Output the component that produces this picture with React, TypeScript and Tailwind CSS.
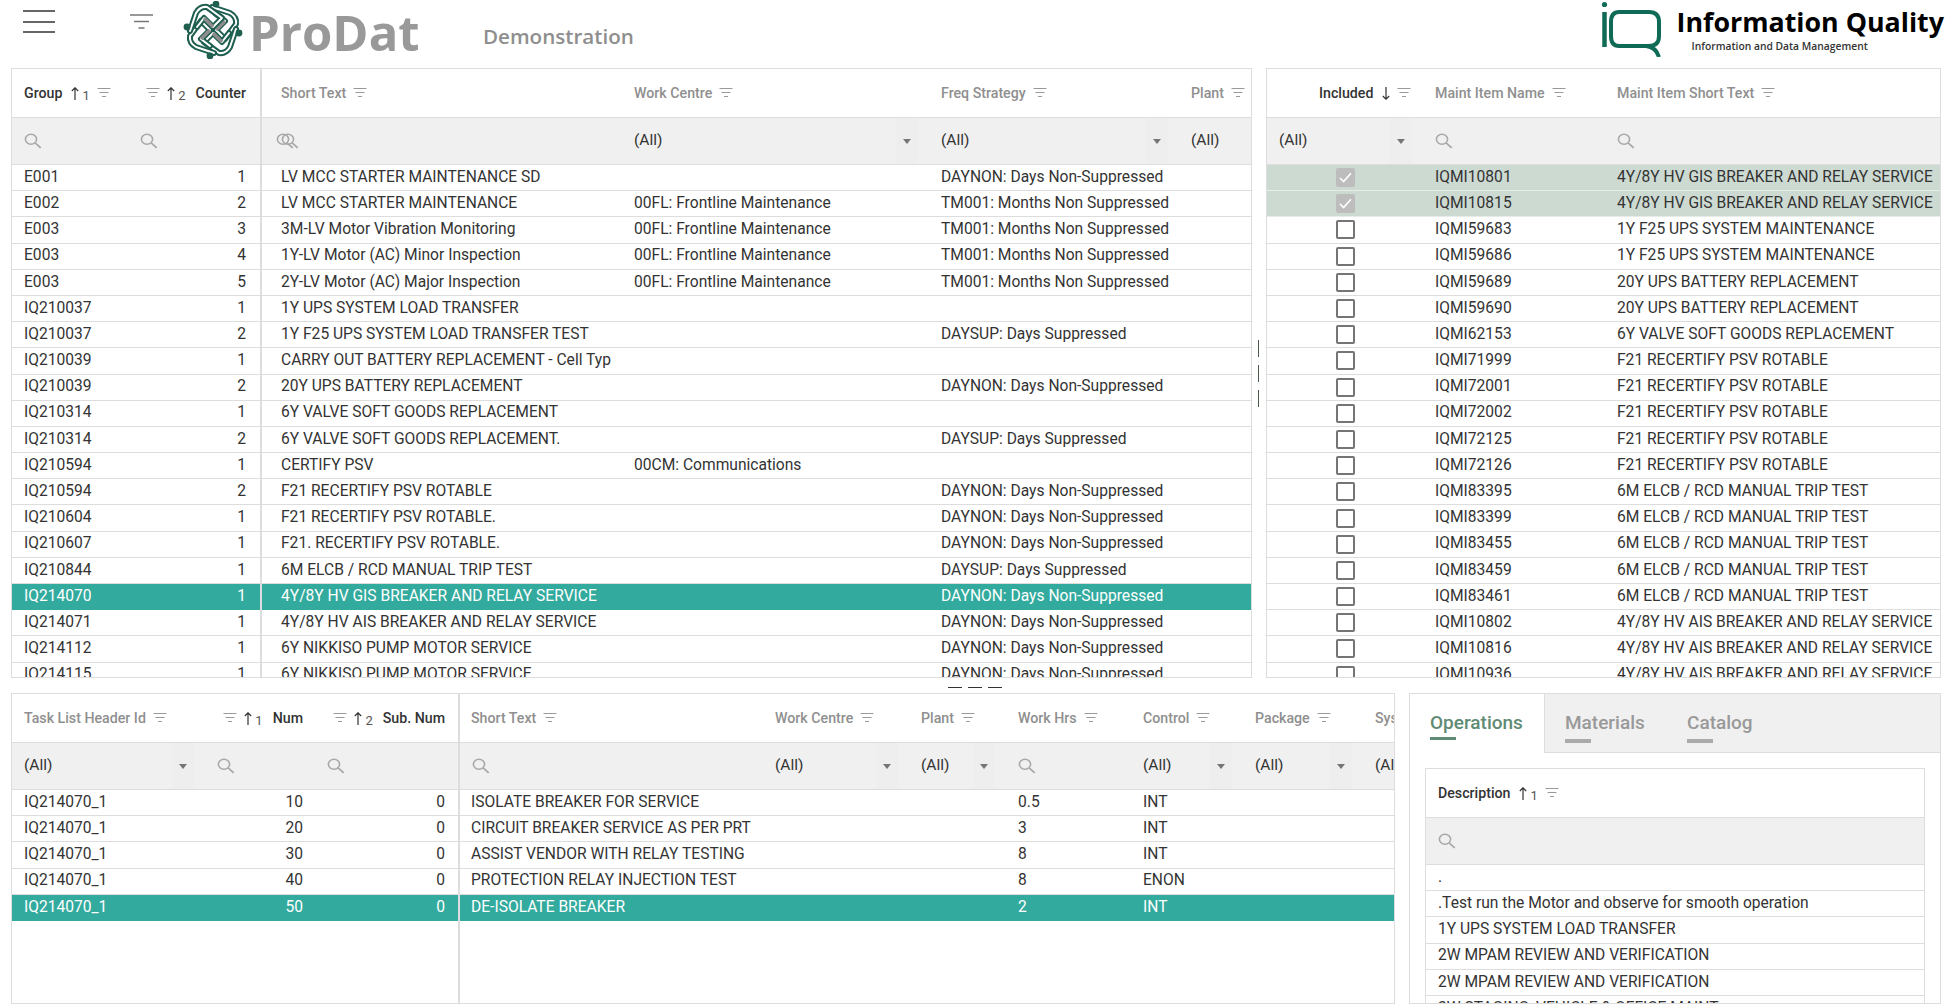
import React from "react";

type Col = {
  w: string;
  pad?: string;
  headPad?: string;
  label?: string;
  sort?: "up" | "down";
  idx?: string;
  right?: boolean;
  center?: boolean;
  filter?: "search" | "all" | "double" | "allshort";
};

const FilterIcon = () => (
  <svg width="14" height="10" viewBox="0 0 14 10" className="shrink-0" fill="none" stroke="#9a9a9a" strokeWidth="1">
    <path d="M0.5 0.5H13.5M2.5 4.5H11.5M5 8.5H9" />
  </svg>
);

const SearchIcon = ({ className = "" }: { className?: string }) => (
  <svg width="18" height="16" viewBox="0 0 17 17" preserveAspectRatio="none" className={`shrink-0 ${className}`} fill="none" stroke="#a8a8a8" strokeWidth="1.5">
    <circle cx="6.6" cy="6.6" r="5.3" />
    <path d="M10.6 10.6L15.8 15.8" strokeWidth="1.8" />
  </svg>
);

const Sort = ({ dir, idx }: { dir: "up" | "down"; idx?: string }) => (
  <span className="flex items-center shrink-0 gap-[3px]">
    <svg width="8" height="13" viewBox="0 0 8 13" fill="none" stroke="#333" strokeWidth="1.2">
      {dir === "up" ? <path d="M4 13V1M0.8 4L4 0.8L7.2 4" /> : <path d="M4 0V12M0.8 9L4 12.2L7.2 9" />}
    </svg>
    {idx && <span className="text-[13px] font-normal text-[#555] mt-[4px] leading-none">{idx}</span>}
  </span>
);

const HeaderCell = ({ col }: { col: Col }) => {
  const dark = !!col.sort;
  const text = <span className={`whitespace-nowrap pt-[1px] ${dark ? "text-[#333]" : "text-[#8f8f8f]"}`}>{col.label}</span>;
  return (
    <div className={`${col.w} ${col.headPad ?? col.pad ?? "px-3"} shrink-0 flex items-center gap-[7px] text-[14.2px] font-medium ${col.right ? "justify-end" : ""}`}>
      {col.right ? (
        <>
          <FilterIcon />
          {col.sort && <Sort dir={col.sort} idx={col.idx} />}
          <span className="ml-[3px] flex">{text}</span>
        </>
      ) : (
        <>
          {text}
          {col.sort && <span className="ml-[2px]"><Sort dir={col.sort} idx={col.idx} /></span>}
          {col.label && <FilterIcon />}
        </>
      )}
    </div>
  );
};

const FilterCell = ({ col }: { col: Col }) => {
  if (col.filter === "all") {
    return (
      <div className={`${col.w} pl-3 pr-[11px] shrink-0 flex items-stretch`}>
        <span className="flex-1 flex items-center text-[15.5px] text-[#333] pb-[1px]">(All)</span>
        <span className="w-[22px] flex items-center justify-center bg-[#eeeeee]">
          <svg width="8" height="5" viewBox="0 0 8 5"><path d="M0 0H8L4 5Z" fill="#757575" /></svg>
        </span>
      </div>
    );
  }
  if (col.filter === "allshort") {
    return (
      <div className={`${col.w} pl-3 shrink-0 flex items-center text-[15.5px] text-[#333] whitespace-nowrap pb-[1px]`}>(All)</div>
    );
  }
  if (col.filter === "double") {
    return (
      <div className={`${col.w} pl-[14px] shrink-0 flex items-center`}>
        <SearchIcon />
        <SearchIcon className="-ml-[13px]" />
      </div>
    );
  }
  return (
    <div className={`${col.w} pl-3 shrink-0 flex items-center`}>
      <SearchIcon />
    </div>
  );
};

const Pane = ({
  cols,
  rows,
  sel,
  greens = [],
  divider,
  grow,
}: {
  cols: Col[];
  rows: React.ReactNode[][];
  sel?: number;
  greens?: number[];
  divider?: boolean;
  grow?: boolean;
}) => (
  <div className={`flex flex-col overflow-hidden h-full ${grow ? "flex-1 min-w-0" : "shrink-0"} ${divider ? "border-r-2 border-[#dddddd]" : ""}`}>
    <div className="flex h-[49px] shrink-0 border-b border-[#dddddd]">
      {cols.map((c, i) => (
        <HeaderCell key={i} col={c} />
      ))}
    </div>
    <div className="flex h-[47px] shrink-0 bg-[#f0f0f0] border-b border-[#dddddd]">
      {cols.map((c, i) => (
        <FilterCell key={i} col={c} />
      ))}
    </div>
    <div className="flex-1 overflow-hidden">
      {rows.map((r, i) => (
        <div
          key={i}
          className={`flex h-[26.2px] border-b text-[15.6px] leading-none whitespace-nowrap ${
            i === sel
              ? "bg-[#33aa9e] text-white border-[#33aa9e]"
              : greens.includes(i)
              ? "bg-[#cddad2] text-[#333] border-[#e6ece8]"
              : "text-[#333] border-[#dddddd]"
          }`}
        >
          {cols.map((c, j) => (
            <div
              key={j}
              className={`${c.w} ${c.pad ?? "px-3"} shrink-0 flex items-center overflow-hidden ${c.right ? "justify-end" : ""} ${c.center ? "justify-center" : ""}`}
            >
              {r[j]}
            </div>
          ))}
        </div>
      ))}
    </div>
  </div>
);

const Check = ({ on }: { on?: boolean }) =>
  on ? (
    <span className="w-[19px] h-[19px] rounded-[2px] bg-[#bdbdbd] flex items-center justify-center">
      <svg width="13" height="11" viewBox="0 0 13 11" fill="none" stroke="#fff" strokeWidth="1.6"><path d="M1 6L4.6 9.6L12 1.2" /></svg>
    </span>
  ) : (
    <span className="w-[19px] h-[19px] rounded-[2px] border-2 border-[#757575] bg-white" />
  );

const NS = "DAYNON: Days Non-Suppressed";
const TM = "TM001: Months Non Suppressed";
const DS = "DAYSUP: Days Suppressed";
const FL = "00FL: Frontline Maintenance";

const topData: [string, string, string, string, string][] = [
  ["E001", "1", "LV MCC STARTER MAINTENANCE SD", "", NS],
  ["E002", "2", "LV MCC STARTER MAINTENANCE", FL, TM],
  ["E003", "3", "3M-LV Motor Vibration Monitoring", FL, TM],
  ["E003", "4", "1Y-LV Motor (AC) Minor Inspection", FL, TM],
  ["E003", "5", "2Y-LV Motor (AC) Major Inspection", FL, TM],
  ["IQ210037", "1", "1Y UPS SYSTEM LOAD TRANSFER", "", ""],
  ["IQ210037", "2", "1Y F25 UPS SYSTEM LOAD TRANSFER TEST", "", DS],
  ["IQ210039", "1", "CARRY OUT BATTERY REPLACEMENT - Cell Typ", "", ""],
  ["IQ210039", "2", "20Y UPS BATTERY REPLACEMENT", "", NS],
  ["IQ210314", "1", "6Y VALVE SOFT GOODS REPLACEMENT", "", ""],
  ["IQ210314", "2", "6Y VALVE SOFT GOODS REPLACEMENT.", "", DS],
  ["IQ210594", "1", "CERTIFY PSV", "00CM: Communications", ""],
  ["IQ210594", "2", "F21 RECERTIFY PSV ROTABLE", "", NS],
  ["IQ210604", "1", "F21 RECERTIFY PSV ROTABLE.", "", NS],
  ["IQ210607", "1", "F21. RECERTIFY PSV ROTABLE.", "", NS],
  ["IQ210844", "1", "6M ELCB / RCD MANUAL TRIP TEST", "", DS],
  ["IQ214070", "1", "4Y/8Y HV GIS BREAKER AND RELAY SERVICE", "", NS],
  ["IQ214071", "1", "4Y/8Y HV AIS BREAKER AND RELAY SERVICE", "", NS],
  ["IQ214112", "1", "6Y NIKKISO PUMP MOTOR SERVICE", "", NS],
  ["IQ214115", "1", "6Y NIKKISO PUMP MOTOR SERVICE", "", NS],
];

const maintData: [string, string][] = [
  ["IQMI10801", "4Y/8Y HV GIS BREAKER AND RELAY SERVICE"],
  ["IQMI10815", "4Y/8Y HV GIS BREAKER AND RELAY SERVICE"],
  ["IQMI59683", "1Y F25 UPS SYSTEM MAINTENANCE"],
  ["IQMI59686", "1Y F25 UPS SYSTEM MAINTENANCE"],
  ["IQMI59689", "20Y UPS BATTERY REPLACEMENT"],
  ["IQMI59690", "20Y UPS BATTERY REPLACEMENT"],
  ["IQMI62153", "6Y VALVE SOFT GOODS REPLACEMENT"],
  ["IQMI71999", "F21 RECERTIFY PSV ROTABLE"],
  ["IQMI72001", "F21 RECERTIFY PSV ROTABLE"],
  ["IQMI72002", "F21 RECERTIFY PSV ROTABLE"],
  ["IQMI72125", "F21 RECERTIFY PSV ROTABLE"],
  ["IQMI72126", "F21 RECERTIFY PSV ROTABLE"],
  ["IQMI83395", "6M ELCB / RCD MANUAL TRIP TEST"],
  ["IQMI83399", "6M ELCB / RCD MANUAL TRIP TEST"],
  ["IQMI83455", "6M ELCB / RCD MANUAL TRIP TEST"],
  ["IQMI83459", "6M ELCB / RCD MANUAL TRIP TEST"],
  ["IQMI83461", "6M ELCB / RCD MANUAL TRIP TEST"],
  ["IQMI10802", "4Y/8Y HV AIS BREAKER AND RELAY SERVICE"],
  ["IQMI10816", "4Y/8Y HV AIS BREAKER AND RELAY SERVICE"],
  ["IQMI10936", "4Y/8Y HV AIS BREAKER AND RELAY SERVICE"],
];

const taskData: [string, string, string, string, string, string][] = [
  ["10", "0", "ISOLATE BREAKER FOR SERVICE", "0.5", "INT", ""],
  ["20", "0", "CIRCUIT BREAKER SERVICE AS PER PRT", "3", "INT", ""],
  ["30", "0", "ASSIST VENDOR WITH RELAY TESTING", "8", "INT", ""],
  ["40", "0", "PROTECTION RELAY INJECTION TEST", "8", "ENON", ""],
  ["50", "0", "DE-ISOLATE BREAKER", "2", "INT", ""],
];

const ProDatMark = () => (
  <svg width="62" height="58" viewBox="-31 -29 62 58" className="shrink-0" fill="none">
    {[0, 90, 180, 270].map((a) => (
      <g key={a} transform={`rotate(${a})`}>
        <path d="M-1 -23 L17 -17 Q24 -13 23 -6 L12 9 L3 0 L12 -9 L3 -16" stroke="#1e5f50" strokeWidth="6" strokeLinejoin="round" strokeLinecap="round" />
        <path d="M-1 -23 L17 -17 Q24 -13 23 -6 L12 9 L3 0 L12 -9 L3 -16" stroke="#ffffff" strokeWidth="2" strokeLinejoin="round" strokeLinecap="round" />
        <path d="M3 0 L12 -9" stroke="#8d8d8d" strokeWidth="3.5" />
        <circle cx="3" cy="-26" r="3.4" fill="#1e5f50" />
      </g>
    ))}
  </svg>
);

const IQMark = () => (
  <svg width="60" height="56" viewBox="0 0 60 56" className="shrink-0" fill="none" stroke="#0f6b55" strokeWidth="4">
    <circle cx="3.5" cy="3.5" r="2.6" fill="#0f6b55" stroke="none" />
    <path d="M3.5 11V46" strokeWidth="4.5" />
    <path d="M18 11H48Q58 11 58 21V35Q58 45 48 45H18Q10 45 10 35V21Q10 11 18 11Z" />
    <path d="M45 45Q55 46 58 56" />
  </svg>
);

const TopBar = () => (
  <div className="h-[68px] shrink-0 flex items-start">
    <div className="w-[32px] ml-[23px] mt-[10px] flex flex-col gap-[8.5px]">
      <div className="h-[2px] bg-[#666666]" />
      <div className="h-[2px] bg-[#666666]" />
      <div className="h-[2px] bg-[#666666]" />
    </div>
    <svg width="23" height="16" viewBox="0 0 23 16" className="ml-[75px] mt-[14px]" fill="none" stroke="#777" strokeWidth="1.6">
      <path d="M0 1H23M4 7.5H19M8.5 14H14.5" />
    </svg>
    <div className="ml-[29px] mt-[1px]"><ProDatMark /></div>
    <span className="ml-[5px] mt-[2px] w-[170px] text-[49px] leading-[60px] font-bold text-[#999999] [font-family:'Open_Sans',sans-serif]">ProDat</span>
    <span className="ml-[64px] mt-[22px] text-[20.6px] leading-[28px] font-semibold text-[#8e8e8e] [font-family:'Open_Sans',sans-serif]">Demonstration</span>
    <div className="ml-auto mt-[1px] flex">
      <IQMark />
      <div className="ml-[16px] mr-[12px] flex flex-col [font-family:'Open_Sans',sans-serif]">
        <span className="text-[26.8px] leading-[34px] mt-[4px] font-bold text-black">Information Quality</span>
        <span className="text-[10.3px] leading-[14px] font-semibold text-[#333] ml-[15px]">Information and Data Management</span>
      </div>
    </div>
  </div>
);

const TopRow = () => (
  <div className="h-[610px] shrink-0 flex pl-[11px]">
    <div className="w-[1241px] h-full flex border border-[#dddddd] overflow-hidden">
      <Pane
        divider
        sel={16}
        cols={[
          { w: "w-[116px]", label: "Group", sort: "up", idx: "1", filter: "search" },
          { w: "w-[132px]", pad: "pl-3 pr-[14px]", label: "Counter", sort: "up", idx: "2", right: true, filter: "search" },
        ]}
        rows={topData.map((r) => [r[0], r[1]])}
      />
      <Pane
        grow
        sel={16}
        cols={[
          { w: "w-[360px]", pad: "pl-[19px]", label: "Short Text", filter: "double" },
          { w: "w-[307px]", label: "Work Centre", filter: "all" },
          { w: "w-[250px]", label: "Freq Strategy", filter: "all" },
          { w: "w-[70px]", label: "Plant", filter: "allshort" },
        ]}
        rows={topData.map((r) => [r[2], r[3], r[4], ""])}
      />
    </div>
    <div className="w-[14px] flex flex-col items-center justify-center gap-[8px] pr-[1px]">
      <div className="w-px h-[17px] bg-[#4a5a4a]" />
      <div className="w-px h-[17px] bg-[#4a5a4a]" />
      <div className="w-px h-[17px] bg-[#4a5a4a]" />
    </div>
    <div className="w-[675px] h-full flex border border-[#dddddd] overflow-hidden">
      <Pane
        grow
        greens={[0, 1]}
        cols={[
          { w: "w-[156px]", label: "Included", sort: "down", center: true, pad: "px-0", headPad: "pl-[52px] pr-2", filter: "all" },
          { w: "w-[182px]", label: "Maint Item Name", filter: "search" },
          { w: "w-[335px]", label: "Maint Item Short Text", filter: "search" },
        ]}
        rows={maintData.map((r, i) => [<Check key="c" on={i < 2} />, r[0], r[1]])}
      />
    </div>
  </div>
);

const Splitter = () => (
  <div className="h-[15px] shrink-0 flex items-center pl-[948px] pt-[3px] gap-[6px]">
    <div className="w-[14px] h-px bg-[#333]" />
    <div className="w-[14px] h-px bg-[#333]" />
    <div className="w-[14px] h-px bg-[#333]" />
  </div>
);

const BottomRow = () => (
  <div className="flex-1 min-h-0 flex pl-[11px] gap-[14px]">
    <div className="w-[1384px] h-full flex border border-[#dddddd] overflow-hidden">
      <Pane
        divider
        sel={4}
        cols={[
          { w: "w-[193px]", label: "Task List Header Id", filter: "all" },
          { w: "w-[110px]", label: "Num", sort: "up", idx: "1", right: true, filter: "search" },
          { w: "w-[143px]", pad: "pl-3 pr-[13px]", label: "Sub. Num", sort: "up", idx: "2", right: true, filter: "search" },
        ]}
        rows={taskData.map((r) => ["IQ214070_1", r[0], r[1]])}
      />
      <Pane
        grow
        sel={4}
        cols={[
          { w: "w-[303px]", pad: "pl-[11px]", label: "Short Text", filter: "search" },
          { w: "w-[146px]", label: "Work Centre", filter: "all" },
          { w: "w-[97px]", label: "Plant", filter: "all" },
          { w: "w-[125px]", label: "Work Hrs", filter: "search" },
          { w: "w-[112px]", label: "Control", filter: "all" },
          { w: "w-[120px]", label: "Package", filter: "all" },
          { w: "w-[120px]", label: "System", filter: "allshort" },
        ]}
        rows={taskData.map((r) => [r[2], "", "", r[3], r[4], "", ""])}
      />
    </div>
    <div className="w-[532px] h-full flex flex-col border border-[#dddddd] overflow-hidden">
      <div className="h-[59px] shrink-0 flex bg-[#f0f0f0] border-b border-[#dddddd] text-[19px] font-medium text-[#999999]">
        <div className="w-[135px] h-[59px] bg-white border-r border-[#dddddd] pl-[20px] pt-[16px] text-[#5f8a74]">
          <div className="leading-[26px]">Operations</div>
          <div className="w-[26px] h-[3px] bg-[#5f8a74] mt-[1px]" />
        </div>
        <div className="pl-[20px] pt-[16px] w-[142px]">
          <div className="leading-[26px]">Materials</div>
          <div className="w-[26px] h-[4px] bg-[#aaaaaa] mt-[3px]" />
        </div>
        <div className="pt-[16px]">
          <div className="leading-[26px]">Catalog</div>
          <div className="w-[26px] h-[4px] bg-[#aaaaaa] mt-[3px]" />
        </div>
      </div>
      <div className="flex-1 min-h-0 px-[15px] pt-[15px]">
        <div className="h-[300px] flex border border-[#dddddd]">
          <Pane
            grow
            cols={[{ w: "w-[498px]", label: "Description", sort: "up", idx: "1", filter: "search" }]}
            rows={[
              ["."],
              [".Test run the Motor and observe for smooth operation"],
              ["1Y UPS SYSTEM LOAD TRANSFER"],
              ["2W MPAM REVIEW AND VERIFICATION"],
              ["2W MPAM REVIEW AND VERIFICATION"],
              ["3W STAGING, VEHICLE & OFFICE MAINT"],
            ]}
          />
        </div>
      </div>
    </div>
  </div>
);

export default function App() {
  return (
    <div className="w-[1956px] h-[1004px] overflow-hidden bg-white flex flex-col [font-family:Roboto,sans-serif]">
      <TopBar />
      <TopRow />
      <Splitter />
      <BottomRow />
    </div>
  );
}
